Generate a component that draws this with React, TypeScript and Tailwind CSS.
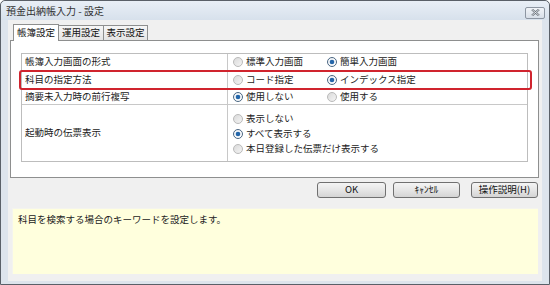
import React from "react";

const FONT = { fontFamily: '"Noto Sans CJK JP", "Noto Sans", sans-serif' };

function Radio({ checked }: { checked?: boolean }) {
  return (
    <svg width="10" height="10" viewBox="0 0 10 10" className="shrink-0">
      <defs>
        <linearGradient id={checked ? "rg1" : "rg0"} x1="0" y1="0" x2="1" y2="1">
          <stop offset="0" stopColor={checked ? "#eef2f6" : "#d8d8d8"} />
          <stop offset="1" stopColor={checked ? "#ffffff" : "#f6f6f6"} />
        </linearGradient>
      </defs>
      <circle
        cx="5"
        cy="5"
        r="4.5"
        fill={`url(#${checked ? "rg1" : "rg0"})`}
        stroke={checked ? "#4a6682" : "#bababa"}
        strokeWidth="1"
      />
      {checked && <circle cx="5" cy="5" r="2.3" fill="#2466aa" />}
    </svg>
  );
}

function Opt({ label, checked, w }: { label: string; checked?: boolean; w?: string }) {
  return (
    <div className={`flex items-center gap-[3px] ${w ?? ""}`}>
      <Radio checked={checked} />
      <span className="text-[9.5px] leading-none text-[#222]">{label}</span>
    </div>
  );
}

function Btn({ label, w }: { label: string; w: string }) {
  return (
    <div
      className={`${w} h-[16px] rounded-[3px] border border-[#707070] bg-gradient-to-b from-[#f4f4f4] via-[#e6e6e6] to-[#d4d4d4] flex items-center justify-center text-[9.5px] leading-none text-[#111]`}
    >
      {label}
    </div>
  );
}

export default function App() {
  return (
    <div style={FONT} className="w-[550px] h-[285px] bg-white">
      <div className="w-[550px] h-[285px] rounded-t-[5px] border border-[#5a6068] bg-[#dde4ec] flex flex-col">
        {/* title bar */}
        <div className="h-[19px] flex items-center justify-between pl-[5px] pr-[4px] bg-gradient-to-b from-[#e9eff6] to-[#d7e1ec] rounded-t-[5px]">
          <span className="text-[10px] leading-none text-[#333] mt-[1px]">預金出納帳入力 - 設定</span>
          <div className="w-[20px] h-[12px] mt-[4px] rounded-[2px] border border-[#8d96a2] bg-gradient-to-b from-[#f1f4f8] to-[#d8dfe8] flex items-center justify-center">
            <svg width="9" height="7" viewBox="0 0 9 7">
              <path d="M1 0.5 L8 6.5 M8 0.5 L1 6.5" stroke="#6d747c" strokeWidth="2.2" />
              <path d="M1 0.5 L8 6.5 M8 0.5 L1 6.5" stroke="#eef1f5" strokeWidth="0.8" />
            </svg>
          </div>
        </div>

        {/* body */}
        <div className="flex-1 mx-[7px] mb-[3px] bg-[#f0f0f0] flex flex-col pt-[4px]">
          {/* tabs */}
          <div className="flex items-end pl-[5px] h-[16px] relative z-10">
            <div className="h-[17px] w-[46px] border border-b-0 border-[#8e8f8f] bg-white flex items-center justify-center text-[9.5px] leading-none text-[#111] -mb-[1px]">
              帳簿設定
            </div>
            <div className="h-[15px] w-[45px] border border-l-0 border-b-0 border-[#8e8f8f] bg-gradient-to-b from-[#f6f6f6] to-[#e4e4e4] flex items-center justify-center text-[9.5px] leading-none text-[#111]">
              運用設定
            </div>
            <div className="h-[15px] w-[44px] border border-l-0 border-b-0 border-[#8e8f8f] bg-gradient-to-b from-[#f6f6f6] to-[#e4e4e4] flex items-center justify-center text-[9.5px] leading-none text-[#111]">
              表示設定
            </div>
          </div>

          {/* panel */}
          <div className="ml-[2px] mr-[3px] border border-[#8e8f8f] bg-white pt-[12px] pb-[15px] px-[10px]">
            <div className="relative border border-[#bdbdbd] flex flex-col">
              {/* row1 */}
              <div className="h-[17px] flex border-b border-[#c8c8c8]">
                <div className="w-[206px] border-r border-[#c8c8c8] pl-[3px] flex items-center text-[9.5px] leading-none text-[#222]">
                  帳簿入力画面の形式
                </div>
                <div className="flex-1 flex items-center pl-[5px]">
                  <Opt label="標準入力画面" w="w-[94px]" />
                  <Opt label="簡単入力画面" checked />
                </div>
              </div>
              {/* row2 */}
              <div className="h-[18px] flex border-b border-[#c8c8c8]">
                <div className="w-[206px] border-r border-[#c8c8c8] pl-[3px] flex items-center text-[9.5px] leading-none text-[#222]">
                  科目の指定方法
                </div>
                <div className="flex-1 flex items-center pl-[5px]">
                  <Opt label="コード指定" w="w-[94px]" />
                  <Opt label="インデックス指定" checked />
                </div>
              </div>
              {/* row3 */}
              <div className="h-[16px] flex border-b border-[#c8c8c8]">
                <div className="w-[206px] border-r border-[#c8c8c8] pl-[3px] flex items-center text-[9.5px] leading-none text-[#222]">
                  摘要未入力時の前行複写
                </div>
                <div className="flex-1 flex items-center pl-[5px]">
                  <Opt label="使用しない" checked w="w-[94px]" />
                  <Opt label="使用する" />
                </div>
              </div>
              {/* row4 */}
              <div className="h-[56px] flex">
                <div className="w-[206px] border-r border-[#c8c8c8] pl-[3px] flex items-center text-[9.5px] leading-none text-[#222]">
                  起動時の伝票表示
                </div>
                <div className="flex-1 flex flex-col pl-[5px] pt-[6px]">
                  <div className="h-[15px] flex items-center">
                    <Opt label="表示しない" />
                  </div>
                  <div className="h-[15px] flex items-center">
                    <Opt label="すべて表示する" checked />
                  </div>
                  <div className="h-[15px] flex items-center">
                    <Opt label="本日登録した伝票だけ表示する" />
                  </div>
                </div>
              </div>

              {/* red highlight */}
              <div className="absolute left-[-3px] top-[16px] w-[513px] h-[20px] border-2 border-[#d0242e] rounded-[3px] pointer-events-none" />
            </div>
          </div>

          {/* buttons */}
          <div className="flex justify-end pr-[4px] mt-[4px]">
            <Btn label="OK" w="w-[69px]" />
            <div className="w-[7px]" />
            <Btn label="ｷｬﾝｾﾙ" w="w-[67px]" />
            <div className="w-[11px]" />
            <Btn label="操作説明(H)" w="w-[67px]" />
          </div>

          {/* help area */}
          <div className="mx-[4px] mt-[10px] h-[66px] bg-[#ffffdd] border-l border-t border-[#f4f4ee] pl-[5px] pt-[5px] text-[9.5px] leading-[10px] text-[#222]">
            科目を検索する場合のキーワードを設定します。
          </div>
        </div>
      </div>
    </div>
  );
}
